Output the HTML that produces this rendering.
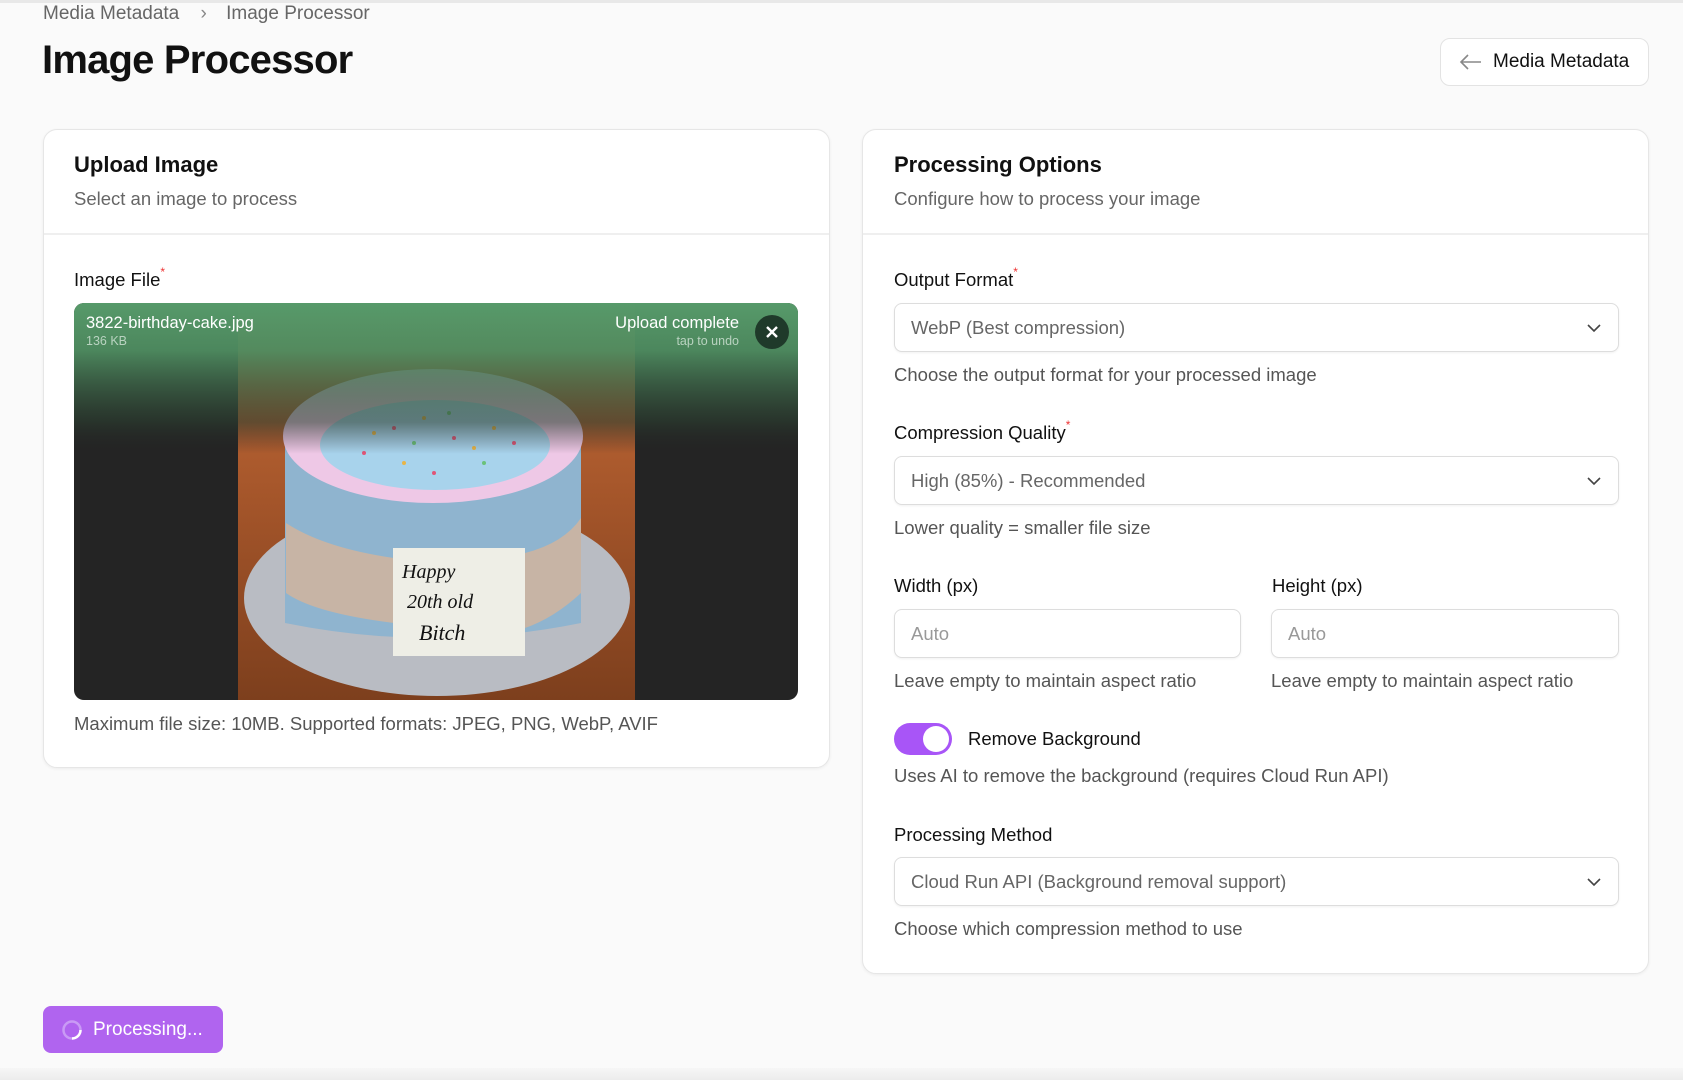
<!DOCTYPE html>
<html><head><meta charset="utf-8"><style>
*{box-sizing:border-box;margin:0;padding:0}
body{width:1683px;height:1080px;background:#fafafa;font-family:"Liberation Sans",sans-serif;color:#111;position:relative;overflow:hidden}
.abs{position:absolute}
.topline{left:0;top:0;width:1683px;height:3px;background:#e8e8e8}
.crumb{top:3px;left:43px;font-size:19px;color:#666;white-space:nowrap}
h1{position:absolute;left:42px;top:38px;font-size:40px;font-weight:700;letter-spacing:-0.8px;color:#111}
.btn{left:1440px;top:38px;width:209px;height:48px;border:1px solid #e3e3e3;border-radius:10px;background:#fff;font-size:19px;display:flex;align-items:center;padding-left:18px;gap:10px;color:#111}
.card{background:#fff;border:1px solid #e6e6e6;border-radius:14px;box-shadow:0 1px 3px rgba(0,0,0,.06)}
.ctitle{font-size:22px;font-weight:700;color:#111}
.csub{font-size:18.5px;color:#666}
.div{height:2px;background:#efefef}
.lbl{font-size:18.5px;color:#111}
.lbl sup{color:#e33;font-size:12px;vertical-align:top;position:relative;top:-4px}
.help{font-size:18.5px;color:#555}
.sel{border:1px solid #ddd;border-radius:8px;background:#fff;box-shadow:0 1px 2px rgba(0,0,0,.06);font-size:18.5px;color:#666;display:flex;align-items:center;padding-left:16px}
.sel svg{position:absolute;right:16px}
.ph{color:#999}
</style></head><body>
<div class="abs topline"></div>
<div class="abs crumb">Media Metadata <span style="margin:0 14px 0 16px;color:#888">›</span> Image Processor</div>
<h1>Image Processor</h1>
<div class="abs btn"><svg width="24" height="16" viewBox="0 0 24 16"><path d="M22 8H2M9 1L2 8l7 7" fill="none" stroke="#888" stroke-width="1.6"/></svg>Media Metadata</div>

<div class="abs card" style="left:43px;top:129px;width:787px;height:639px">
 <div class="abs ctitle" style="left:30px;top:22px">Upload Image</div>
 <div class="abs csub" style="left:30px;top:58px">Select an image to process</div>
 <div class="abs div" style="left:0;top:103px;width:785px"></div>
 <div class="abs lbl" style="left:30px;top:139px">Image File<sup>*</sup></div>
 <div class="abs" style="left:30px;top:173px;width:724px;height:397px;border-radius:10px;overflow:hidden;background:#242424">
  <svg class="abs" style="left:0;top:0" width="724" height="397" viewBox="0 0 724 397">
   <defs>
    <linearGradient id="g" x1="0" y1="0" x2="0" y2="1"><stop offset="0" stop-color="#579a6a"/><stop offset=".12" stop-color="#4e8c60" stop-opacity=".95"/><stop offset=".3" stop-color="#2b3e30" stop-opacity=".6"/><stop offset=".38" stop-color="#242424" stop-opacity="0"/></linearGradient>
    <linearGradient id="w" x1="0" y1="0" x2="0" y2="1"><stop offset="0" stop-color="#c86f3a"/><stop offset=".5" stop-color="#a4552a"/><stop offset="1" stop-color="#7d3f1d"/></linearGradient>
   </defs>
   <rect x="164" y="0" width="397" height="397" fill="url(#w)"/>
   <ellipse cx="363" cy="295" rx="193" ry="98" fill="#b9bcc3"/>
   <path d="M211 133 L211 320 Q359 350 507 320 L507 133 Z" fill="#8fb4cf"/>
   <ellipse cx="359" cy="133" rx="150" ry="67" fill="#eec8e6"/>
   <ellipse cx="361" cy="142" rx="115" ry="45" fill="#a8d3ec"/>
   <g fill="#e9b547"><circle cx="300" cy="130" r="2"/><circle cx="350" cy="115" r="2"/><circle cx="400" cy="145" r="2"/><circle cx="330" cy="160" r="2"/><circle cx="420" cy="125" r="2"/></g>
   <g fill="#e05577"><circle cx="320" cy="125" r="2"/><circle cx="380" cy="135" r="2"/><circle cx="440" cy="140" r="2"/><circle cx="360" cy="170" r="2"/><circle cx="290" cy="150" r="2"/></g>
   <g fill="#6bc27a"><circle cx="340" cy="140" r="2"/><circle cx="410" cy="160" r="2"/><circle cx="375" cy="110" r="2"/></g>
   <path d="M212 220 Q250 245 320 255 L320 320 Q240 310 212 290Z" fill="#d4b49a" opacity=".8"/>
   <path d="M451 250 Q490 240 507 215 L507 290 Q480 315 451 325Z" fill="#d4b49a" opacity=".8"/>
   <rect x="319" y="245" width="132" height="108" fill="#eeeee6"/>
   <text x="328" y="275" font-family="Liberation Serif,serif" font-style="italic" font-size="20" fill="#111">Happy</text>
   <text x="333" y="305" font-family="Liberation Serif,serif" font-style="italic" font-size="20" fill="#111">20th old</text>
   <text x="345" y="337" font-family="Liberation Serif,serif" font-style="italic" font-size="22" fill="#111">Bitch</text>
   <rect x="0" y="0" width="724" height="397" fill="url(#g)"/>
   <circle cx="698" cy="29" r="17" fill="#1f3a2a"/>
   <path d="M693 24l10 10M703 24l-10 10" stroke="#fff" stroke-width="2.4"/>
  </svg>
  <div class="abs" style="left:12px;top:11px;color:#fff;font-size:16.5px">3822-birthday-cake.jpg</div>
  <div class="abs" style="left:12px;top:31px;color:#b9d3c0;font-size:12.5px">136 KB</div>
  <div class="abs" style="right:59px;top:11px;color:#fff;font-size:16.5px">Upload complete</div>
  <div class="abs" style="right:59px;top:31px;color:#b9d3c0;font-size:12.5px">tap to undo</div>
 </div>
 <div class="abs help" style="left:30px;top:583px">Maximum file size: 10MB. Supported formats: JPEG, PNG, WebP, AVIF</div>
</div>

<div class="abs card" style="left:862px;top:129px;width:787px;height:845px">
 <div class="abs ctitle" style="left:31px;top:22px">Processing Options</div>
 <div class="abs csub" style="left:31px;top:58px">Configure how to process your image</div>
 <div class="abs div" style="left:0;top:103px;width:785px"></div>
 <div class="abs lbl" style="left:31px;top:139px">Output Format<sup>*</sup></div>
 <div class="abs sel" style="left:31px;top:173px;width:725px;height:49px">WebP (Best compression)<svg width="16" height="10"><path d="M2 2l6 6 6-6" fill="none" stroke="#444" stroke-width="1.6"/></svg></div>
 <div class="abs help" style="left:31px;top:234px">Choose the output format for your processed image</div>
 <div class="abs lbl" style="left:31px;top:292px">Compression Quality<sup>*</sup></div>
 <div class="abs sel" style="left:31px;top:326px;width:725px;height:49px">High (85%) - Recommended<svg width="16" height="10"><path d="M2 2l6 6 6-6" fill="none" stroke="#444" stroke-width="1.6"/></svg></div>
 <div class="abs help" style="left:31px;top:387px">Lower quality = smaller file size</div>
 <div class="abs lbl" style="left:31px;top:445px">Width (px)</div>
 <div class="abs lbl" style="left:409px;top:445px">Height (px)</div>
 <div class="abs sel ph" style="left:31px;top:479px;width:347px;height:49px"><span class="ph">Auto</span></div>
 <div class="abs sel" style="left:408px;top:479px;width:348px;height:49px"><span class="ph">Auto</span></div>
 <div class="abs help" style="left:31px;top:540px">Leave empty to maintain aspect ratio</div>
 <div class="abs help" style="left:408px;top:540px">Leave empty to maintain aspect ratio</div>
 <div class="abs" style="left:31px;top:593px;width:58px;height:32px;border-radius:16px;background:#a855f7"><div class="abs" style="right:3px;top:3px;width:26px;height:26px;border-radius:13px;background:#fff"></div></div>
 <div class="abs lbl" style="left:105px;top:598px">Remove Background</div>
 <div class="abs help" style="left:31px;top:635px">Uses AI to remove the background (requires Cloud Run API)</div>
 <div class="abs lbl" style="left:31px;top:694px">Processing Method</div>
 <div class="abs sel" style="left:31px;top:727px;width:725px;height:49px">Cloud Run API (Background removal support)<svg width="16" height="10"><path d="M2 2l6 6 6-6" fill="none" stroke="#444" stroke-width="1.6"/></svg></div>
 <div class="abs help" style="left:31px;top:788px">Choose which compression method to use</div>
</div>

<div class="abs" style="left:43px;top:1006px;width:180px;height:47px;border-radius:8px;background:#b064ef;display:flex;align-items:center;padding-left:18px;gap:10px;color:#fff;font-size:19px">
 <svg width="22" height="22" viewBox="0 0 22 22"><circle cx="11" cy="11" r="8.5" fill="none" stroke="#c99af5" stroke-width="2.5"/><path d="M19.5 11A8.5 8.5 0 0 1 11 19.5" fill="none" stroke="#fff" stroke-width="2.5"/></svg>Processing...</div>
<div class="abs" style="left:0;top:1068px;width:1683px;height:12px;background:linear-gradient(#f6f6f6,#ececec)"></div>
</body></html>
